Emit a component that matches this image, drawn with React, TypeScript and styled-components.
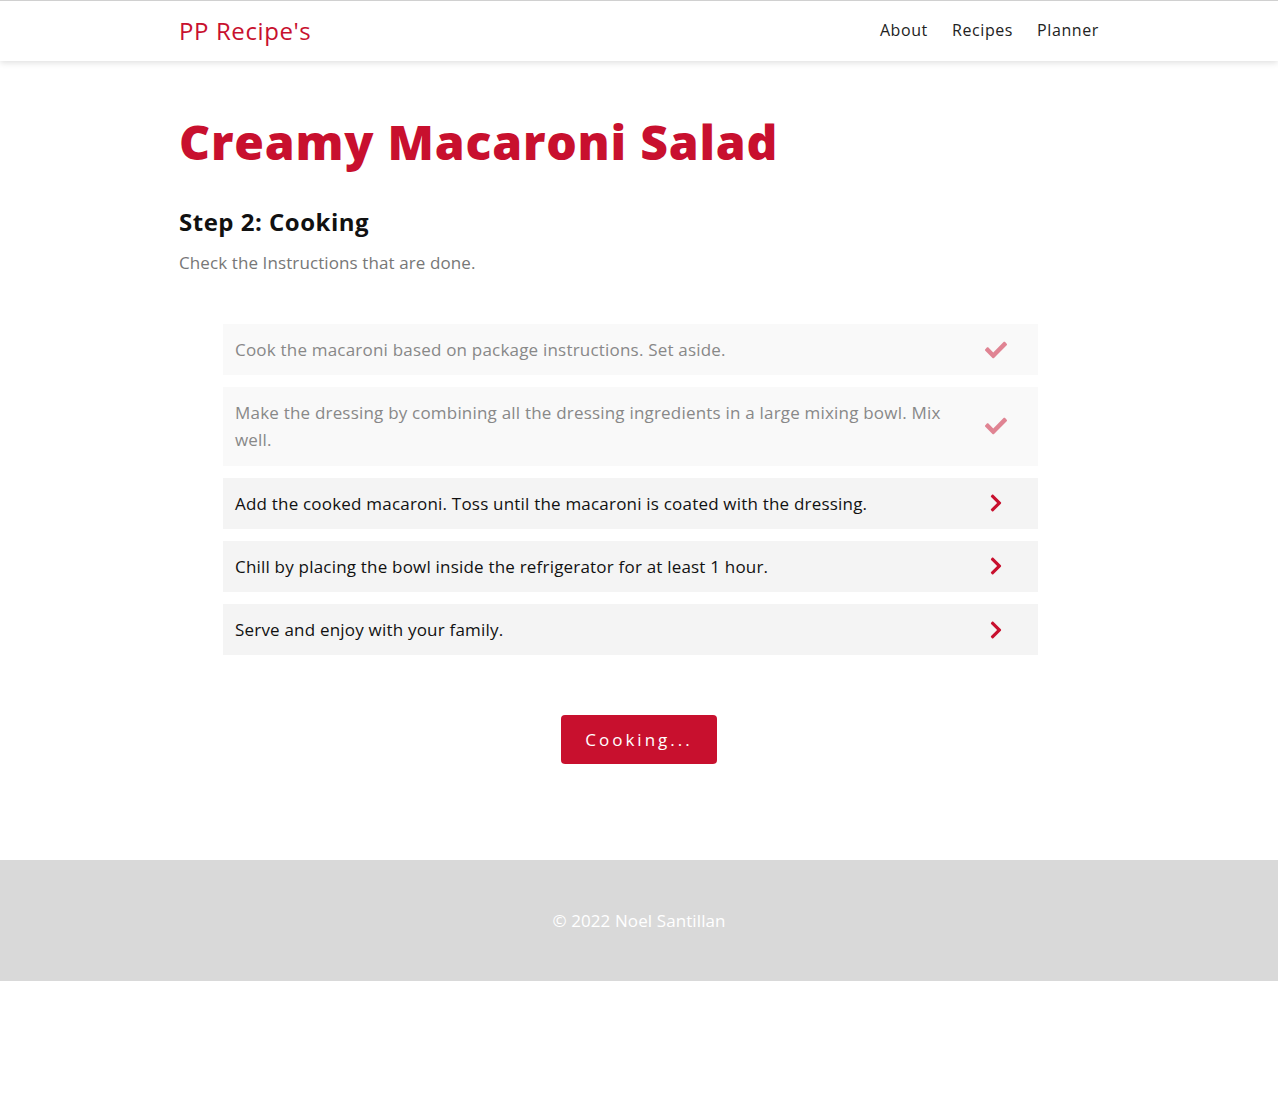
import React from "react";
import styled, { createGlobalStyle } from "styled-components";
import { FaCheck, FaChevronRight } from "react-icons/fa";

const Global = createGlobalStyle`
  * { box-sizing: border-box; }
  body {
    margin: 0;
    font-family: "Open Sans", "DejaVu Sans", sans-serif;
    color: #111;
    background: #fff;
  }
`;

const RED = "#c8102e";

const Header = styled.header`
  border-top: 1px solid #d0d0d0;
  height: 61px;
  background: #fff;
  box-shadow: 0 2px 6px rgba(0, 0, 0, 0.12);
  position: relative;
  z-index: 1;
`;

const Container = styled.div`
  width: 920px;
  margin: 0 auto;
`;

const HeaderInner = styled(Container)`
  height: 100%;
  display: flex;
  align-items: center;
  justify-content: space-between;
  padding-bottom: 2px;
`;

const Brand = styled.a`
  color: ${RED};
  font-size: 24px;
  text-decoration: none;
  letter-spacing: 0.6px;
`;

const Nav = styled.nav`
  display: flex;
  gap: 24px;
`;

const NavLink = styled.a`
  color: #222;
  font-size: 16px;
  letter-spacing: 0.6px;
  text-decoration: none;
`;

const Main = styled(Container)`
  padding: 49px 0 96px;
`;

const Title = styled.h1`
  margin: 0;
  color: ${RED};
  font-size: 48px;
  font-weight: 800;
  line-height: 64px;
  letter-spacing: 0.8px;
`;

const Step = styled.h2`
  margin: 32px 0 0;
  font-size: 24px;
  font-weight: 700;
  line-height: 32px;
  letter-spacing: 0.5px;
`;

const Hint = styled.p`
  margin: 13px 0 0;
  color: #777;
  font-size: 17px;
  letter-spacing: 0.1px;
  line-height: 24px;
`;

const List = styled.ul`
  list-style: none;
  margin: 49px 0 0 44px;
  padding: 0;
  width: 815px;
  display: flex;
  flex-direction: column;
  gap: 12px;
`;

const Item = styled.li<{ $done: boolean }>`
  display: flex;
  align-items: center;
  justify-content: space-between;
  padding: 12px 30px 12px 12px;
  background: ${(p) => (p.$done ? "#f9f9f9" : "#f4f4f4")};
  color: ${(p) => (p.$done ? "#888" : "#111")};
  font-size: 17px;
  letter-spacing: 0.2px;
  line-height: 27.2px;
`;

const ItemText = styled.span`
  max-width: 715px;
`;

const IconWrap = styled.span<{ $done: boolean }>`
  display: flex;
  align-items: center;
  justify-content: center;
  width: 24px;
  flex: none;
  color: ${(p) => (p.$done ? "rgba(200, 16, 46, 0.5)" : RED)};
`;

const ButtonRow = styled.div`
  display: flex;
  justify-content: center;
  margin-top: 60px;
`;

const Button = styled.button`
  background: ${RED};
  color: #fff;
  border: none;
  border-radius: 4px;
  width: 156px;
  height: 49px;
  font-family: inherit;
  font-size: 17px;
  letter-spacing: 3px;
  cursor: pointer;
`;

const Footer = styled.footer`
  background: #d9d9d9;
  height: 121px;
  display: flex;
  align-items: center;
  justify-content: center;
  color: #fff;
  font-size: 17px;
  letter-spacing: 0.1px;
`;

const steps = [
  { text: "Cook the macaroni based on package instructions. Set aside.", done: true },
  {
    text: "Make the dressing by combining all the dressing ingredients in a large mixing bowl. Mix well.",
    done: true,
  },
  { text: "Add the cooked macaroni. Toss until the macaroni is coated with the dressing.", done: false },
  { text: "Chill by placing the bowl inside the refrigerator for at least 1 hour.", done: false },
  { text: "Serve and enjoy with your family.", done: false },
];

export default function App() {
  return (
    <>
      <Global />
      <Header>
        <HeaderInner>
          <Brand href="#">PP Recipe's</Brand>
          <Nav>
            <NavLink href="#">About</NavLink>
            <NavLink href="#">Recipes</NavLink>
            <NavLink href="#">Planner</NavLink>
          </Nav>
        </HeaderInner>
      </Header>
      <Main>
        <Title>Creamy Macaroni Salad</Title>
        <Step>Step 2: Cooking</Step>
        <Hint>Check the Instructions that are done.</Hint>
        <List>
          {steps.map((s, i) => (
            <Item key={i} $done={s.done}>
              <ItemText>{s.text}</ItemText>
              <IconWrap $done={s.done}>
                {s.done ? <FaCheck size={22} /> : <FaChevronRight size={20} />}
              </IconWrap>
            </Item>
          ))}
        </List>
        <ButtonRow>
          <Button>Cooking...</Button>
        </ButtonRow>
      </Main>
      <Footer>© 2022 Noel Santillan</Footer>
    </>
  );
}
